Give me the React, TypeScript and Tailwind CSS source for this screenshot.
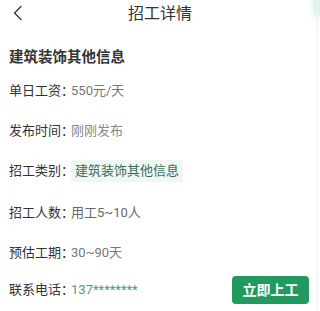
import React from "react";

export default function App() {
  const font = { fontFamily: "Roboto, 'Noto Sans CJK SC', sans-serif" };
  return (
    <div className="relative w-[320px] h-[311px] bg-white overflow-hidden text-[#333]" style={font}>
      <div className="absolute right-[-6px] top-[-6px] w-[14px] h-[24px] rounded-full bg-[#dff3ea] blur-[2px]" />
      <div className="absolute right-[2px] top-0 bottom-0 w-px bg-[#f2f4f3]" />
      <div className="relative h-[27px] flex items-center justify-center">
        <svg className="absolute left-[12px] top-[5px]" width="12" height="16" viewBox="0 0 12 16" fill="none">
          <polyline points="9,1.5 2.5,8 9,14.5" stroke="#333" strokeWidth="1.3" strokeLinecap="round" strokeLinejoin="round" />
        </svg>
        <span className="text-[16px] text-[#333] leading-none">招工详情</span>
      </div>
      <div className="px-[9px]">
        <div className="h-[44px] flex items-end pb-[6px]">
          <span className="text-[14.5px] font-bold text-[#333] leading-none">建筑装饰其他信息</span>
        </div>
        <div className="h-[40px] flex items-center text-[13px]">
          <span className="text-[#333]">单日工资：</span>
          <span className="text-[#777] -ml-[3px]">550元/天</span>
        </div>
        <div className="h-[39px] flex items-center text-[13px]">
          <span className="text-[#333]">发布时间：</span>
          <span className="text-[#888] -ml-[3px]">刚刚发布</span>
        </div>
        <div className="h-[42px] flex items-center text-[13px]">
          <span className="text-[#333]">招工类别：</span>
          <span className="-ml-[3px] bg-[#eef7f2] text-[#3f6b5c] px-[4px] h-[22px] flex items-center rounded-[2px]">建筑装饰其他信息</span>
        </div>
        <div className="h-[42px] flex items-center text-[13px]">
          <span className="text-[#333]">招工人数：</span>
          <span className="text-[#666] -ml-[3px]">用工5~10人</span>
        </div>
        <div className="h-[37px] flex items-center text-[13px]">
          <span className="text-[#333]">预估工期：</span>
          <span className="text-[#777] -ml-[3px]">30~90天</span>
        </div>
        <div className="h-[38px] flex items-center justify-between text-[13px]">
          <div className="flex items-center">
            <span className="text-[#333]">联系电话：</span>
            <span className="text-[#4d9b7b] -ml-[3px]">137********</span>
          </div>
          <button className="w-[77px] h-[28px] mr-[2px] rounded-[4px] bg-[#22995f] text-white text-[14px] font-bold flex items-center justify-center">
            立即上工
          </button>
        </div>
      </div>
    </div>
  );
}
